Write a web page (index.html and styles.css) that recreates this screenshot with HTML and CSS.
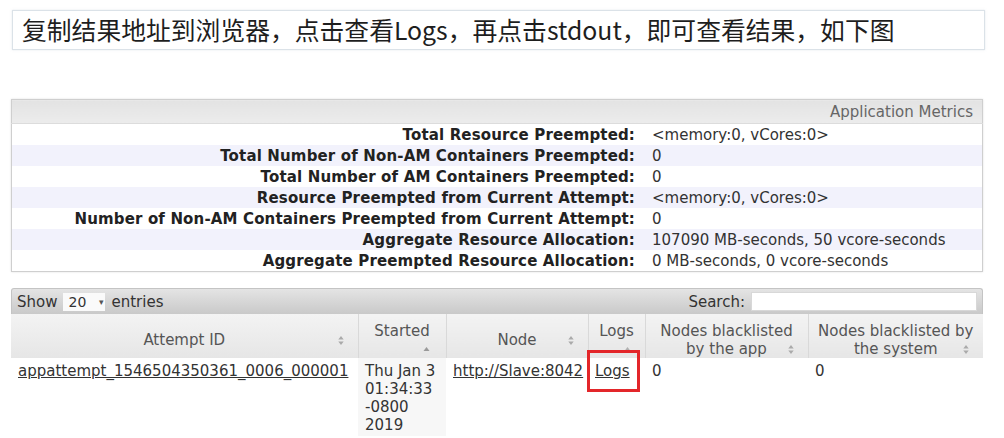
FILE: index.html
```html
<!DOCTYPE html>
<html>
<head>
<meta charset="utf-8">
<link rel="stylesheet" href="styles.css">
</head>
<body>
<div class="page">
  <div class="banner">复制结果地址到浏览器，点击查看Logs，再点击stdout，即可查看结果，如下图</div>

  <table class="metrics">
    <thead>
      <tr><th colspan="2" class="mhead">Application Metrics</th></tr>
    </thead>
    <tbody>
      <tr class="odd"><th>Total Resource Preempted:</th><td>&lt;memory:0, vCores:0&gt;</td></tr>
      <tr class="even"><th>Total Number of Non-AM Containers Preempted:</th><td>0</td></tr>
      <tr class="odd"><th>Total Number of AM Containers Preempted:</th><td>0</td></tr>
      <tr class="even"><th>Resource Preempted from Current Attempt:</th><td>&lt;memory:0, vCores:0&gt;</td></tr>
      <tr class="odd"><th>Number of Non-AM Containers Preempted from Current Attempt:</th><td>0</td></tr>
      <tr class="even"><th>Aggregate Resource Allocation:</th><td>107090 MB-seconds, 50 vcore-seconds</td></tr>
      <tr class="odd"><th>Aggregate Preempted Resource Allocation:</th><td>0 MB-seconds, 0 vcore-seconds</td></tr>
    </tbody>
  </table>

  <div class="attempts">
    <div class="toolbar">
      <div class="length">Show <span class="select">20 <span class="caret">▾</span></span> entries</div>
      <div class="filter">Search: <span class="search"></span></div>
    </div>
    <table class="grid">
      <colgroup>
        <col class="c1"><col class="c2"><col class="c3"><col class="c4"><col class="c5"><col class="c6">
      </colgroup>
      <thead>
        <tr>
          <th><div class="sw">Attempt ID<svg class="si" viewBox="0 0 6 10"><path d="M3 0 L6 4 L0 4 Z M0 6 L6 6 L3 10 Z"/></svg></div></th>
          <th><div class="sw stack">Started<svg class="si asc" viewBox="0 0 6 4"><path d="M3 0 L6 4 L0 4 Z"/></svg></div></th>
          <th><div class="sw">Node<svg class="si" viewBox="0 0 6 10"><path d="M3 0 L6 4 L0 4 Z M0 6 L6 6 L3 10 Z"/></svg></div></th>
          <th><div class="sw stack logs">Logs<svg class="si asc" viewBox="0 0 6 4"><path d="M3 0 L6 4 L0 4 Z"/></svg></div></th>
          <th><div class="sw">Nodes blacklisted by the app<svg class="si" viewBox="0 0 6 10"><path d="M3 0 L6 4 L0 4 Z M0 6 L6 6 L3 10 Z"/></svg></div></th>
          <th><div class="sw">Nodes blacklisted by the system<svg class="si" viewBox="0 0 6 10"><path d="M3 0 L6 4 L0 4 Z M0 6 L6 6 L3 10 Z"/></svg></div></th>
        </tr>
      </thead>
      <tbody>
        <tr>
          <td><a href="#">appattempt_1546504350361_0006_000001</a></td>
          <td class="sorted">Thu Jan 3 01:34:33 -0800 2019</td>
          <td><a href="#">http://Slave:8042</a></td>
          <td class="logcell"><a href="#">Logs</a><span class="mark"></span></td>
          <td>0</td>
          <td>0</td>
        </tr>
      </tbody>
    </table>
  </div>
</div>
</body>
</html>
```

FILE: styles.css
```css
html, body {
  margin: 0;
  padding: 0;
  background: #ffffff;
}

body {
  font-family: "DejaVu Sans", "Noto Sans", sans-serif;
  font-size: 15px;
  color: #333;
}

.page {
  padding: 10px 21px 0 11px;
  display: flex;
  flex-direction: column;
}

.banner {
  margin-left: 1px;
  margin-right: -2px;
  height: 38px;
  border: 1px solid #dbe2e8;
  padding-left: 9px;
  font-family: "Noto Sans CJK SC", "Microsoft YaHei", sans-serif;
  font-size: 24.8px;
  line-height: 37px;
  color: #1e1e1e;
  white-space: nowrap;
  box-shadow: 0 0 2px rgba(200, 210, 220, 0.5);
}

/* metrics */
.metrics {
  margin-top: 49px;
  width: 972px;
  border-collapse: collapse;
  border: 1px solid #cfcfcf;
  box-shadow: 0 0 2px rgba(0, 0, 0, 0.12);
}

.metrics .mhead {
  height: 23px;
  padding: 0 9px 0 0;
  text-align: right;
  font-weight: normal;
  color: #666;
  background: linear-gradient(#e3e3e3, #ececec);
  border-bottom: 1px solid #dcdcdc;
}

.metrics tbody th {
  width: 623px;
  padding: 0 6px 0 0;
  text-align: right;
  font-weight: bold;
  letter-spacing: 0.15px;
  color: #222;
  height: 21px;
  white-space: nowrap;
}

.metrics tbody td {
  padding: 0 0 0 11px;
  height: 21px;
  white-space: nowrap;
}

.metrics .odd { background: #ffffff; }
.metrics .even { background: #f2f2fc; }

/* attempts */
.attempts {
  margin-top: 16px;
  width: 972px;
}

.toolbar {
  height: 26px;
  box-sizing: border-box;
  display: flex;
  align-items: center;
  justify-content: space-between;
  padding: 0 5px 0 5px;
  background: linear-gradient(#e4e4e4, #c9c9c9);
  border: 1px solid #c4c4c4;
  border-bottom: none;
  border-radius: 3px 3px 0 0;
}

.length {
  display: flex;
  align-items: center;
}

.select {
  display: inline-flex;
  align-items: center;
  justify-content: space-between;
  width: 42px;
  height: 18px;
  box-sizing: border-box;
  margin: 0 6px;
  padding: 0 2px 0 5px;
  background: #fafafa;
  font-size: 14px;
}

.caret {
  font-size: 9px;
  color: #555;
}

.filter {
  display: flex;
  align-items: center;
}

.search {
  display: inline-block;
  margin-left: 6px;
  width: 226px;
  height: 19px;
  background: #fff;
  border: 1px solid #d8d8d8;
  box-sizing: border-box;
}

.grid {
  width: 972px;
  table-layout: fixed;
  border-collapse: collapse;
}

.grid .c1 { width: 347px; }
.grid .c2 { width: 88px; }
.grid .c3 { width: 142px; }
.grid .c4 { width: 57px; }
.grid .c5 { width: 163px; }
.grid .c6 { width: 175px; }

.grid thead th {
  height: 36px;
  padding: 8px 0 0;
  font-weight: normal;
  color: #555;
  line-height: 18px;
  text-align: center;
  vertical-align: middle;
  background: linear-gradient(#f3f3f3, #e6e6e6);
  border-left: 1px solid #fbfbfb;
  border-right: 1px solid #d9d9d9;
}

.grid thead th:first-child { border-left: none; }
.grid thead th:last-child { border-right: none; }

.sw {
  position: relative;
  padding: 0 6px;
}

.sw.stack {
  padding: 0 2px 18px;
}

.si {
  position: absolute;
  right: 14px;
  bottom: 4px;
  width: 6px;
  height: 9px;
  fill: #aaa;
}

.si.asc {
  height: 4px;
  width: 7px;
  bottom: 7px;
  right: 16px;
  fill: #999;
}

.sw.logs .si.asc { right: 14px; fill: #b0b0b0; }

.grid tbody td {
  vertical-align: top;
  padding: 4px 7px 2px 7px;
  line-height: 18px;
  color: #333;
}

.grid tbody td.sorted {
  background: #f7f7f7;
  padding-right: 6px;
}

.grid a {
  color: #333;
  text-decoration: underline;
}

.logcell {
  position: relative;
}

.mark {
  position: absolute;
  left: -1px;
  top: -8px;
  width: 47px;
  height: 36px;
  border: 3px solid #e3262a;
}
```
